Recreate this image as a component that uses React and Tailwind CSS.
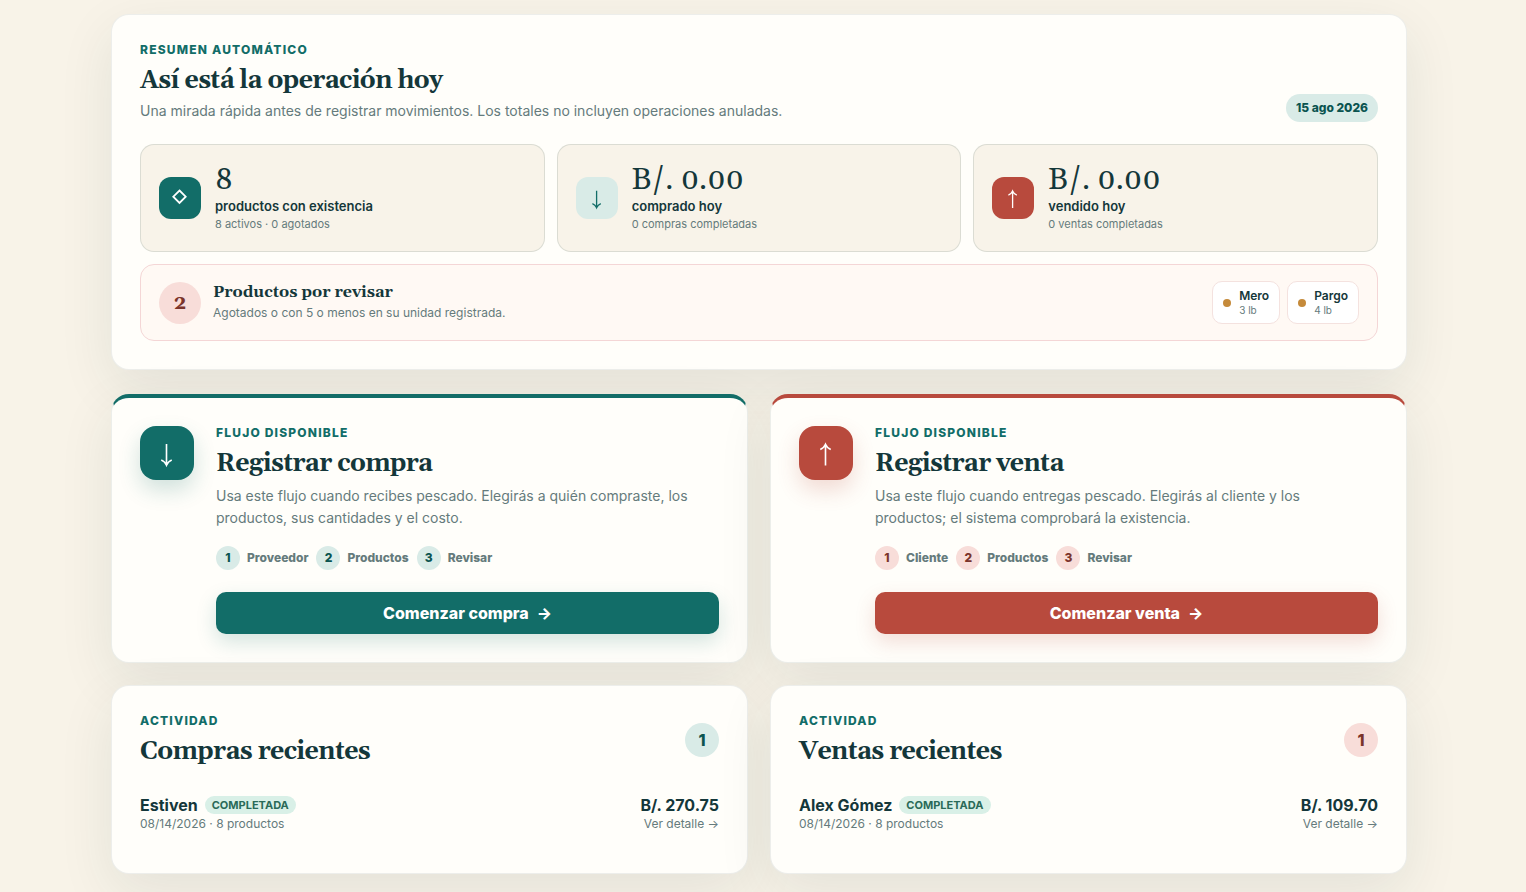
const stats = [
  { value: '8', label: 'productos con existencia', detail: '8 activos · 0 agotados', icon: 'diamond', tone: 'bg-[#126d68] text-white' },
  { value: 'B/. 0.00', label: 'comprado hoy', detail: '0 compras completadas', icon: 'down', tone: 'bg-[#d9ebe7] text-[#126d68]' },
  { value: 'B/. 0.00', label: 'vendido hoy', detail: '0 ventas completadas', icon: 'up', tone: 'bg-[#b84a3d] text-white' },
]

const lowStock = [
  { name: 'Mero', left: '3 lb' },
  { name: 'Pargo', left: '4 lb' },
]

const flows = [
  {
    title: 'Registrar compra',
    text: 'Usa este flujo cuando recibes pescado. Elegirás a quién compraste, los productos, sus cantidades y el costo.',
    steps: ['Proveedor', 'Productos', 'Revisar'],
    action: 'Comenzar compra',
    icon: 'down',
    border: 'border-t-[#126d68]',
    iconTone: 'bg-[#126d68] shadow-[0_10px_22px_rgba(18,109,104,0.2)]',
    buttonTone: 'bg-[#126d68] shadow-[0_8px_20px_rgba(18,109,104,0.18)] hover:bg-[#0b5450]',
    stepTone: 'bg-[#d9ebe7] text-[#0b5450]',
  },
  {
    title: 'Registrar venta',
    text: 'Usa este flujo cuando entregas pescado. Elegirás al cliente y los productos; el sistema comprobará la existencia.',
    steps: ['Cliente', 'Productos', 'Revisar'],
    action: 'Comenzar venta',
    icon: 'up',
    border: 'border-t-[#b84a3d]',
    iconTone: 'bg-[#b84a3d] shadow-[0_10px_22px_rgba(184,74,61,0.2)]',
    buttonTone: 'bg-[#b84a3d] shadow-[0_8px_20px_rgba(184,74,61,0.18)] hover:bg-[#8f352b]',
    stepTone: 'bg-[#f8ddd9] text-[#7b342b]',
  },
]

const activity = [
  { title: 'Compras recientes', name: 'Estiven', total: 'B/. 270.75', tone: 'bg-[#d9ebe7] text-[#0b5450]' },
  { title: 'Ventas recientes', name: 'Alex Gómez', total: 'B/. 109.70', tone: 'bg-[#f8ddd9] text-[#7b342b]' },
]

const serif = 'font-[Gelasio,Georgia,"Liberation_Serif",serif]'
const card = 'rounded-[18px] border border-[#14373a]/8 bg-[#fffefa] shadow-[0_18px_55px_rgba(20,55,58,0.09)]'

// Thin arrows and diamond, drawn on a 24px grid
const iconPaths = {
  down: 'M11.6 4.8v17M7.4 17.6c1.9.7 3.3 2.1 4.2 4.2c.9-2.1 2.3-3.5 4.2-4.2',
  up: 'M11.6 22V5M7.4 9.2c1.9-.7 3.3-2.1 4.2-4.2c.9 2.1 2.3 3.5 4.2 4.2',
  diamond: 'M11.5 4.5l6.2 6.2l-6.2 6.2l-6.2-6.2z',
}

function Icon({ name, className }) {
  return (
    <svg viewBox="0 0 24 24" className={className} fill="none" stroke="currentColor" strokeWidth={name === 'diamond' ? 1.8 : 1.3} aria-hidden="true">
      <path d={iconPaths[name]} />
    </svg>
  )
}

function Heading({ eyebrow, title }) {
  return (
    <div>
      <p className="text-xs leading-[14px] font-extrabold tracking-widest text-[#126d68] uppercase">{eyebrow}</p>
      <h2 className={`${serif} mt-[11px] text-[25px] leading-[27px] font-bold tracking-tight`}>{title}</h2>
    </div>
  )
}

function Summary() {
  return (
    <section className={`${card} p-7`}>
      <div className="flex items-end justify-between gap-6">
        <div>
          <Heading eyebrow="Resumen automático" title="Así está la operación hoy" />
          <p className="mt-[5px] text-sm leading-[22px] text-[#657b7c]">
            Una mirada rápida antes de registrar movimientos. Los totales no incluyen operaciones anuladas.
          </p>
        </div>
        <time className="rounded-full bg-[#d9ebe7] px-[10px] py-[6px] text-xs font-extrabold whitespace-nowrap text-[#0b5450]" dateTime="2026-08-15">
          15 ago 2026
        </time>
      </div>

      {/* Stats */}
      <div className="mt-[22px] grid grid-cols-1 gap-3 md:grid-cols-3">
        {stats.map((stat) => (
          <article key={stat.label} className="flex items-center gap-[14px] rounded-[14px] border border-[#14373a]/12 bg-[#f8f3e9] p-[18px]">
            <span className={`${stat.tone} grid size-[42px] shrink-0 place-items-center rounded-xl`}>
              <Icon name={stat.icon} className="size-6" />
            </span>
            <div>
              <strong className={`${serif} block text-[30px] leading-[34px] font-normal`}>{stat.value}</strong>
              <span className="block text-[13px] leading-[18px] font-semibold">{stat.label}</span>
              <small className="block text-[11px] leading-[18px] text-[#657b7c]">{stat.detail}</small>
            </div>
          </article>
        ))}
      </div>

      {/* Low stock */}
      <div className="mt-3 flex items-center justify-between gap-4 rounded-[14px] border border-[#f4d6d6] bg-[#fff9f4] px-[18px] py-4">
        <div className="flex items-center gap-3">
          <span className={`${serif} grid size-[42px] place-items-center rounded-full bg-[#f8ddd9] text-xl font-bold text-[#7b342b]`}>2</span>
          <div>
            <h3 className={`${serif} text-base leading-5 font-bold`}>Productos por revisar</h3>
            <p className="text-xs leading-[22px] text-[#657b7c]">Agotados o con 5 o menos en su unidad registrada.</p>
          </div>
        </div>
        <ul className="flex gap-[7px]">
          {lowStock.map((item) => (
            <li key={item.name} className="flex items-center gap-2 rounded-[10px] border border-[#f4e2df] bg-white px-[10px] py-[6px]">
              <span className="size-2 rounded-full bg-[#c58a3a]" />
              <span>
                <strong className="block text-xs leading-[15px] font-semibold">{item.name}</strong>
                <small className="block text-[10px] leading-[14px] text-[#657b7c]">{item.left}</small>
              </span>
            </li>
          ))}
        </ul>
      </div>
    </section>
  )
}

function FlowCard({ flow }) {
  return (
    <article className={`${card} ${flow.border} flex items-start gap-[22px] border-t-4 p-7`}>
      <span className={`${flow.iconTone} grid size-[54px] shrink-0 place-items-center rounded-2xl text-white`}>
        <Icon name={flow.icon} className="size-[30px]" />
      </span>
      <div className="min-w-0 flex-1">
        <Heading eyebrow="Flujo disponible" title={flow.title} />
        <p className="mt-[7px] pr-2 text-sm leading-[22px] text-[#657b7c]">{flow.text}</p>
        <ol className="mt-[17px] flex flex-wrap gap-2">
          {flow.steps.map((step, index) => (
            <li key={step} className="flex items-center gap-[7px] text-xs font-extrabold text-[#657b7c]">
              <span className={`${flow.stepTone} grid size-6 place-items-center rounded-full`}>{index + 1}</span>
              {step}
            </li>
          ))}
        </ol>
        <button type="button" className={`${flow.buttonTone} mt-[22px] flex h-[42px] w-full items-center justify-center gap-2 rounded-[10px] text-base font-extrabold text-white`}>
          {flow.action} <span>→</span>
        </button>
      </div>
    </article>
  )
}

function ActivityCard({ item }) {
  return (
    <article className={`${card} p-7`}>
      <div className="flex items-center justify-between">
        <Heading eyebrow="Actividad" title={item.title} />
        <span className={`${item.tone} grid size-[34px] place-items-center rounded-full text-base font-extrabold`}>1</span>
      </div>
      <a href="#detalle" className="mt-[17px] flex items-center justify-between py-3">
        <span>
          <span className="flex items-center gap-[7px] leading-5 font-bold">
            {item.name}
            <span className="rounded-full bg-[#d9f0e7] px-[7px] text-[11px] leading-[18px] font-bold text-[#2a6a58]">COMPLETADA</span>
          </span>
          <span className="block text-xs leading-[18px] text-[#657b7c]">08/14/2026 · 8 productos</span>
        </span>
        <span className="text-right">
          <strong className="block leading-5 font-bold">{item.total}</strong>
          <span className="block text-xs leading-[18px] text-[#657b7c]">Ver detalle →</span>
        </span>
      </a>
    </article>
  )
}

export default function App() {
  return (
    <div className="min-h-screen overflow-hidden bg-[#f8f3e8] pr-2 font-[Inter,sans-serif] text-[#14373a]">
      <main className="mx-auto max-w-[1296px] pt-[14px] pb-[18px]">
        <Summary />
        <div className="mt-6 grid grid-cols-1 gap-[22px] md:grid-cols-2">
          {flows.map((flow) => (
            <FlowCard key={flow.title} flow={flow} />
          ))}
          {activity.map((item) => (
            <ActivityCard key={item.title} item={item} />
          ))}
        </div>
      </main>
    </div>
  )
}
